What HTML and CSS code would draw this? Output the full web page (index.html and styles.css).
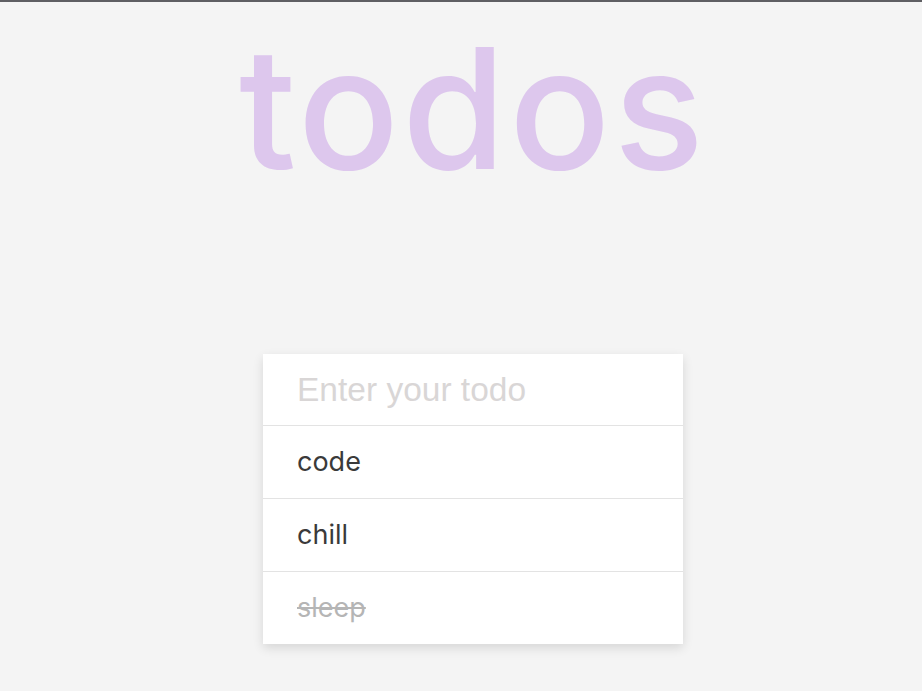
FILE: index.html
```html
<!DOCTYPE html>
<html lang="en">
<head>
<meta charset="utf-8">
<title>todos</title>
<link rel="stylesheet" href="styles.css">
</head>
<body>
<div class="app">
  <h1 class="title">todos</h1>
  <div class="card">
    <input class="new-todo" type="text" placeholder="Enter your todo">
    <ul class="list">
      <li class="item">code</li>
      <li class="item">chill</li>
      <li class="item done">sleep</li>
    </ul>
  </div>
</div>
</body>
</html>
```
FILE: styles.css
```css
html, body {
  margin: 0;
  padding: 0;
  background: #f4f4f4;
  height: 100%;
}
body {
  border-top: 2px solid #5f5f63;
  box-sizing: border-box;
  font-family: "Inter", "Liberation Sans", sans-serif;
}
.app {
  display: flex;
  flex-direction: column;
  align-items: center;
  padding-left: 24px;
}
.title {
  margin: 0;
  padding-top: 6px;
  font-size: 168px;
  line-height: 200px;
  font-weight: 500;
  color: #ddc7ed;
  letter-spacing: 3px;
}
.card {
  margin-top: 146px;
  width: 420px;
  background: #fff;
  box-shadow: 0 4px 10px rgba(0, 0, 0, 0.12);
}
.new-todo {
  display: block;
  width: 100%;
  box-sizing: border-box;
  height: 72px;
  border: none;
  border-bottom: 1px solid #e3e3e3;
  padding: 0 34px;
  font-family: "Liberation Sans", Arial, sans-serif;
  font-size: 33.5px;
  color: #333;
  outline: none;
  background: #fff;
}
.new-todo::placeholder {
  color: #d9d6d6;
}
.list {
  list-style: none;
  margin: 0;
  padding: 0;
}
.item {
  height: 72px;
  line-height: 72px;
  padding: 0 34px;
  font-size: 27px;
  color: #3a3a3a;
  border-bottom: 1px solid #e3e3e3;
}
.item:last-child {
  border-bottom: none;
}
.item.done {
  color: #b5b5b5;
  text-decoration: line-through;
}
```
